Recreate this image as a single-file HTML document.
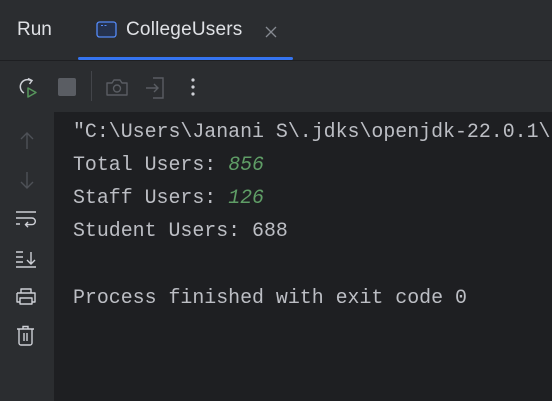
<!DOCTYPE html>
<html><head><style>
html,body{margin:0;padding:0;width:552px;height:401px;overflow:hidden;background:#1e1f22;}
.top{position:absolute;left:0;top:0;width:552px;height:112px;background:#2b2d30;}
.sep{position:absolute;left:0;top:60px;width:552px;height:1px;background:#1e1f22;}
.blue{position:absolute;left:78px;top:57px;width:215px;height:3px;background:#3574f0;border-radius:2px;}
.side{position:absolute;left:0;top:112px;width:54px;height:289px;background:#2b2d30;}
.ui{position:absolute;font-family:"Liberation Sans",sans-serif;color:#dfe1e5;font-size:19px;}
.con{position:absolute;left:73px;font-family:"Liberation Mono",monospace;font-size:19.9px;letter-spacing:0;color:#bcbec4;white-space:pre;}
.g{color:#5f9d66;font-style:italic;}
svg{position:absolute;}
</style></head><body>
<div class="top"></div>
<div class="sep"></div>
<div class="blue"></div>
<div class="side"></div>
<div class="ui" style="left:17px;top:19px;">Run</div>
<svg style="left:96px;top:21px" width="22" height="18"><rect x="1" y="1" width="19" height="15" rx="2.5" fill="#25324d" stroke="#548af7" stroke-width="1.3"/><line x1="5" y1="4.5" x2="7" y2="4.5" stroke="#548af7"/><line x1="8.5" y1="4.5" x2="10.5" y2="4.5" stroke="#548af7"/></svg>
<div class="ui" style="left:126px;top:19px;letter-spacing:0.2px;">CollegeUsers</div>
<svg style="left:264px;top:25px" width="14" height="14"><path d="M2 2L12 12M12 2L2 12" stroke="#868a91" stroke-width="1.3"/></svg>
<!-- toolbar -->
<svg style="left:16px;top:76px" width="24" height="24"><path d="M15 4.5A7 7 0 1 0 8 17" fill="none" stroke="#ced0d6" stroke-width="1.5"/><path d="M12 2.5L16 4.5 13.5 8" fill="none" stroke="#ced0d6" stroke-width="1.5"/><path d="M12 12L20 16.5 12 21Z" fill="none" stroke="#57965c" stroke-width="1.5" stroke-linejoin="round"/></svg>
<div style="position:absolute;left:58px;top:78px;width:18px;height:18px;background:#5a5d63;border-radius:2px;"></div>
<div style="position:absolute;left:91px;top:71px;width:1px;height:30px;background:#43454a;"></div>
<svg style="left:105px;top:77px" width="24" height="20"><path d="M2 6h5l2-3h6l2 3h5v12H2Z" fill="none" stroke="#5a5d63" stroke-width="1.4" stroke-linejoin="round"/><circle cx="12" cy="11.5" r="3.5" fill="none" stroke="#5a5d63" stroke-width="1.4"/></svg>
<svg style="left:144px;top:76px" width="24" height="24"><path d="M9 2h10v20H9" fill="none" stroke="#5a5d63" stroke-width="1.4"/><path d="M2 12h12M10 8l4 4-4 4" fill="none" stroke="#5a5d63" stroke-width="1.4"/></svg>
<svg style="left:188px;top:76px" width="10" height="22"><circle cx="5" cy="4" r="1.6" fill="#ced0d6"/><circle cx="5" cy="11" r="1.6" fill="#ced0d6"/><circle cx="5" cy="18" r="1.6" fill="#ced0d6"/></svg>
<!-- sidebar -->
<svg style="left:17px;top:131px" width="20" height="20"><path d="M10 2v16M4 8l6-6 6 6" fill="none" stroke="#4e5157" stroke-width="1.4"/></svg>
<svg style="left:17px;top:170px" width="20" height="20"><path d="M10 2v16M4 12l6 6 6-6" fill="none" stroke="#4e5157" stroke-width="1.4"/></svg>
<svg style="left:15px;top:210px" width="22" height="20"><path d="M1 2h20M1 8h16a3.3 3.3 0 0 1 0 6.6h-6M1 14h4M13 12l-2.5 2.6 2.5 2.6" fill="none" stroke="#ced0d6" stroke-width="1.4"/></svg>
<svg style="left:15px;top:249px" width="22" height="20"><path d="M1 3h7M1 8h7M1 13h7M1 18h20M16 3v12M12 11l4 4 4-4" fill="none" stroke="#ced0d6" stroke-width="1.4"/></svg>
<svg style="left:15px;top:287px" width="22" height="20"><path d="M6 6V2h10v4M2 6h18v9h-3M5 15H2V6M5 11h12v6H5Z" fill="none" stroke="#ced0d6" stroke-width="1.4" stroke-linejoin="round"/></svg>
<svg style="left:16px;top:325px" width="22" height="22"><path d="M1 4h17M7 4V1.5h5V4M3 4v14a2 2 0 0 0 2 2h9a2 2 0 0 0 2-2V4M8 8v8M11 8v8" fill="none" stroke="#ced0d6" stroke-width="1.4"/></svg>
<!-- console -->
<div class="con" style="top:120px;">"C:\Users\Janani S\.jdks\openjdk-22.0.1\</div>
<div class="con" style="top:153px;">Total Users: <span class="g">856</span></div>
<div class="con" style="top:186px;">Staff Users: <span class="g">126</span></div>
<div class="con" style="top:219px;">Student Users: 688</div>
<div class="con" style="top:286px;">Process finished with exit code 0</div>
</body></html>
